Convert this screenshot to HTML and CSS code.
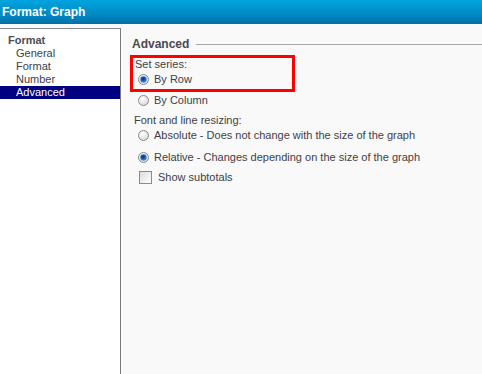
FILE: index.html
```html
<!DOCTYPE html>
<html>
<head>
<meta charset="utf-8">
<link rel="stylesheet" href="styles.css">
</head>
<body>
<div class="titlebar">Format: Graph</div>
<div class="main">
  <div class="nav">
    <div class="nav-head">Format</div>
    <div class="nav-item">General</div>
    <div class="nav-item">Format</div>
    <div class="nav-item">Number</div>
    <div class="nav-item selected">Advanced</div>
  </div>
  <div class="content">
    <div class="section-head"><span class="section-title">Advanced</span><span class="section-rule"></span></div>
    <div class="highlight">
      <div class="label">Set series:</div>
      <div class="option opt-row">
        <svg class="radio" width="11" height="11" viewBox="0 0 11 11"><defs><radialGradient id="g1" cx="0.4" cy="0.35" r="0.7"><stop offset="0" stop-color="#ffffff"/><stop offset="1" stop-color="#d6d6d6"/></radialGradient><radialGradient id="d1" cx="0.45" cy="0.4" r="0.6"><stop offset="0" stop-color="#0a2c6a"/><stop offset="0.55" stop-color="#1d5fb6"/><stop offset="1" stop-color="#4a9be6"/></radialGradient></defs><circle cx="5.5" cy="5.5" r="5" fill="url(#g1)" stroke="#8c8c8c"/><circle cx="5.5" cy="5.5" r="3.2" fill="url(#d1)"/></svg>
        <span>By Row</span>
      </div>
    </div>
    <div class="option opt-col">
      <svg class="radio" width="11" height="11" viewBox="0 0 11 11"><defs><radialGradient id="g2" cx="0.4" cy="0.35" r="0.7"><stop offset="0" stop-color="#ffffff"/><stop offset="1" stop-color="#d6d6d6"/></radialGradient></defs><circle cx="5.5" cy="5.5" r="5" fill="url(#g2)" stroke="#8c8c8c"/></svg>
      <span>By Column</span>
    </div>
    <div class="label label-font">Font and line resizing:</div>
    <div class="option opt-abs">
      <svg class="radio" width="11" height="11" viewBox="0 0 11 11"><defs><radialGradient id="g3" cx="0.4" cy="0.35" r="0.7"><stop offset="0" stop-color="#ffffff"/><stop offset="1" stop-color="#d6d6d6"/></radialGradient></defs><circle cx="5.5" cy="5.5" r="5" fill="url(#g3)" stroke="#8c8c8c"/></svg>
      <span>Absolute - Does not change with the size of the graph</span>
    </div>
    <div class="option opt-rel">
      <svg class="radio" width="11" height="11" viewBox="0 0 11 11"><defs><radialGradient id="g4" cx="0.4" cy="0.35" r="0.7"><stop offset="0" stop-color="#ffffff"/><stop offset="1" stop-color="#d6d6d6"/></radialGradient><radialGradient id="d4" cx="0.45" cy="0.4" r="0.6"><stop offset="0" stop-color="#0a2c6a"/><stop offset="0.55" stop-color="#1d5fb6"/><stop offset="1" stop-color="#4a9be6"/></radialGradient></defs><circle cx="5.5" cy="5.5" r="5" fill="url(#g4)" stroke="#8c8c8c"/><circle cx="5.5" cy="5.5" r="3.2" fill="url(#d4)"/></svg>
      <span>Relative - Changes depending on the size of the graph</span>
    </div>
    <div class="option opt-chk">
      <span class="checkbox"></span>
      <span>Show subtotals</span>
    </div>
  </div>
</div>
</body>
</html>
```

FILE: styles.css
```css
html, body {
  margin: 0;
  padding: 0;
}
body {
  width: 482px;
  height: 374px;
  overflow: hidden;
  background: #f9f9f9;
  font-family: "Liberation Sans", Arial, sans-serif;
  font-size: 11px;
  color: #3e3e48;
}
.titlebar {
  height: 24px;
  line-height: 24px;
  padding-left: 2px;
  background: linear-gradient(to bottom, #00a4df 0%, #008cc6 55%, #006fa6 100%);
  color: #ffffff;
  font-weight: bold;
  font-size: 12px;
}
.main {
  display: flex;
  height: 350px;
}
.nav {
  margin-top: 4px;
  width: 120px;
  background: #ffffff;
  border-top: 1px solid #8a8a8a;
  border-right: 1px solid #7a7a7a;
  padding-top: 5px;
  line-height: 13px;
}
.nav-head {
  padding-left: 8px;
  font-weight: bold;
  color: #4c4c58;
}
.nav-item {
  padding-left: 16px;
  color: #3e3e48;
}
.nav-item.selected {
  background: #000080;
  color: #ffffff;
}
.content {
  flex: 1;
  padding-left: 9px;
  padding-top: 14px;
  line-height: 13px;
}
.section-head {
  display: flex;
  align-items: center;
  padding-left: 2px;
}
.section-title {
  font-weight: bold;
  font-size: 12px;
  color: #4a4a52;
}
.section-rule {
  flex: 1;
  height: 1px;
  background: #a8a8a8;
  margin-left: 7px;
  margin-top: -1px;
}
.highlight {
  margin-top: 4px;
  width: 157px;
  border: 3px solid #ff0000;
  padding: 0 0 3px 2px;
}
.label {
  line-height: 13px;
}
.option {
  display: flex;
  align-items: center;
  height: 13px;
}
.radio {
  flex: none;
  margin-right: 5px;
}
.opt-row {
  margin-top: 2px;
  padding-left: 3px;
}
.opt-col {
  margin-top: 2px;
  padding-left: 8px;
}
.label-font {
  margin-top: 7px;
  padding-left: 4px;
}
.opt-abs {
  margin-top: 2px;
  padding-left: 8px;
}
.opt-rel {
  margin-top: 9px;
  padding-left: 8px;
}
.opt-chk {
  margin-top: 7px;
  padding-left: 9px;
}
.checkbox {
  flex: none;
  width: 11px;
  height: 11px;
  border: 1px solid #8a8a8a;
  background: linear-gradient(135deg, #dcdcdc 0%, #f4f4f4 70%, #ffffff 100%);
  margin-right: 6px;
}
```
